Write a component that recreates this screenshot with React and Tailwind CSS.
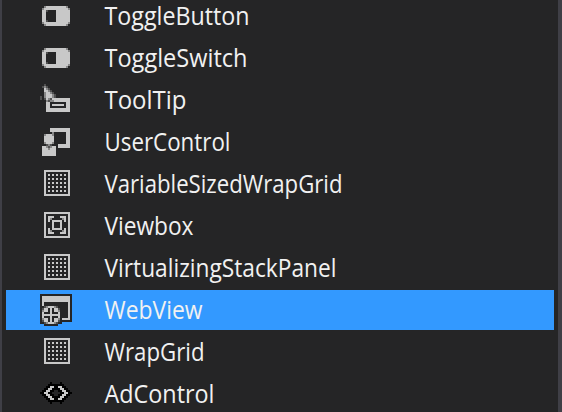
const FILLS = { w: '#c8c8c8', g: '#888888', h: '#505050', d: '#252526', k: '#000000' };

const TOGGLE = [
  '', '', '',
  '..gwwwwwwwwwwg..',
  '.gwwwwwwwwwwwwg.',
  '.wwhddddwwwwwww.',
  '.wwdddddwwwwwww.',
  '.wwdddddwwwwwww.',
  '.wwdddddwwwwwww.',
  '.wwdddddwwwwwww.',
  '.wwhddddwwwwwww.',
  '.gwwwwwwwwwwwwg.',
  '..gwwwwwwwwwwg..',
];

const TOOLTIP = [
  '..h.............',
  '.hgh............',
  '..wgh...........',
  '..wwgh..........',
  '..gwwgh.........',
  '..gwwwgh........',
  'h.gwwwgh........',
  'h.hwghwwwwwwwww.',
  '...ghggwwwwwwww.',
  '...wwddddddddww.',
  '...wwdwwwwwwdww.',
  '...wwddddddddww.',
  '...wwwwwwwwwwww.',
  '...wwwwwwwwwwww.',
];

const USER = [
  '',
  '.....wwwwwwwwww.',
  '.....wwwwwwwwww.',
  '......gd.....ww.',
  '..gwwwg......ww.',
  '..wwwww......ww.',
  '..wwwww......ww.',
  '..wwwww......ww.',
  '..gwwwg......ww.',
  '...hgh...wwwwww.',
  '.wwghgww.wwwwww.',
  '.wwwgwww........',
  '.wwwwwww........',
  '.wwwwwww........',
  '.wwwwwww........',
];

const GRID = [
  '',
  '..wwwwwwwwwwwww.',
  '..w...........w.',
  '..w.w.w.w.w.w.w.',
  '..w...........w.',
  '..w.w.w.w.w.w.w.',
  '..w...........w.',
  '..w.w.w.w.w.w.w.',
  '..w...........w.',
  '..w.w.w.w.w.w.w.',
  '..w...........w.',
  '..w.w.w.w.w.w.w.',
  '..w...........w.',
  '..wwwwwwwwwwwww.',
];

const VIEWBOX = [
  '',
  '..wwwwwwwwwwwww.',
  '..w...........w.',
  '..w.www...www.w.',
  '..w.wg.....gw.w.',
  '..w.w.wwwww.w.w.',
  '..w...w...w...w.',
  '..w...w...w...w.',
  '..w...w...w...w.',
  '..w.w.wwwww.w.w.',
  '..w.wg.....gw.w.',
  '..w.www...www.w.',
  '..w...........w.',
  '..wwwwwwwwwwwww.',
];

const WEBVIEW = [
  'dddddddddddddddd',
  'dwwwwwwwwwwwwwwd',
  'dwwwwwwwwwwwwwwd',
  'dwwwwwwwwwwwwwwd',
  'dwddddddddddddwd',
  'dwddddddddddddwd',
  'ddhgwwwghdddddwd',
  'dhwwdwdwwhddddwd',
  'dgwwdwdwwgddddwd',
  'dwdddwdddwddddwd',
  'dwwwwwwwwwddddwd',
  'dwdddwdddwddddwd',
  'dgwwdwdwwgdwwwwd',
  'dhwwdwdwwhdddddd',
  'ddhgwwwghdd.....',
  '..ddddddd.......',
];

const AD = [
  '', '',
  '.....k....k.....',
  '....kkkkkkkk....',
  '...kkwwkkwwkk...',
  '..kkwwkkkkwwkk..',
  '.kkwwkkddkkwwkk.',
  'kkwwkkddddkkwwkk',
  '.kkwwkkddkkwwkk.',
  '..kkwwkkkkwwkk..',
  '...kkwwkkwwkk...',
  '....kkkkkkkk....',
  '.....k....k.....',
];

const ITEMS = [
  { name: 'ToggleButton', icon: TOGGLE, width: 145 },
  { name: 'ToggleSwitch', icon: TOGGLE, width: 143 },
  { name: 'ToolTip', icon: TOOLTIP, width: 82 },
  { name: 'UserControl', icon: USER, width: 126 },
  { name: 'VariableSizedWrapGrid', icon: GRID, width: 238 },
  { name: 'Viewbox', icon: VIEWBOX, width: 89 },
  { name: 'VirtualizingStackPanel', icon: GRID, width: 232 },
  { name: 'WebView', icon: WEBVIEW, width: 98, selected: true },
  { name: 'WrapGrid', icon: GRID, width: 100 },
  { name: 'AdControl', icon: AD, width: 110 },
];

function PixelIcon({ rows }) {
  return (
    <svg className="h-8 w-8 shrink-0" viewBox="0 0 16 16" shapeRendering="crispEdges" aria-hidden="true">
      {rows.flatMap((row, y) =>
        [...row].map((c, x) =>
          FILLS[c] ? <rect key={x + '-' + y} x={x} y={y} width="1" height="1" fill={FILLS[c]} /> : null
        )
      )}
    </svg>
  );
}

function Label({ name, width }) {
  return (
    <svg className="ml-8 h-10 w-[260px] shrink-0 overflow-visible" aria-label={name}>
      <text x="0.5" y="28.5" textLength={width} lengthAdjust="spacingAndGlyphs" className="fill-[#f1f1f1] font-['Open_Sans',sans-serif] text-[25px]">
        {name}
      </text>
    </svg>
  );
}

export default function App() {
  return (
    <div className="h-[412px] w-[562px] overflow-hidden border-l-2 border-r-4 border-[#3f3f46] bg-[#252526] px-1">
      <ul className="-mt-1 flex flex-col gap-0.5">
        {ITEMS.map((item) => (
          <li
            key={item.name}
            className={item.selected ? 'flex h-10 items-center bg-[#3399ff] pl-[34px]' : 'flex h-10 items-center pl-[34px]'}
          >
            <PixelIcon rows={item.icon} />
            <Label name={item.name} width={item.width} />
          </li>
        ))}
      </ul>
    </div>
  );
}
